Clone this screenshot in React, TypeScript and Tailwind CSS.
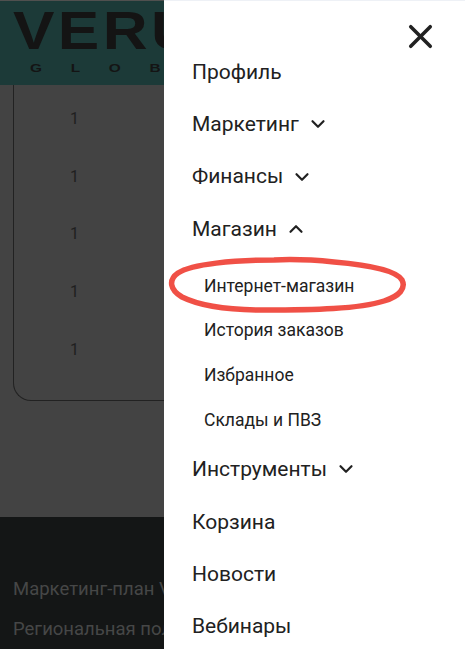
import React from 'react';
import { ChevronDown, ChevronUp, X } from 'lucide-react';

const rows = [1, 1, 1, 1, 1];

const MainItem = ({ label, icon }: { label: string; icon?: 'down' | 'up' }) => (
  <div className="flex h-[52.3px] items-center pl-[28px] text-[21px] leading-none text-[#212121]">
    <span>{label}</span>
    {icon === 'down' && <ChevronDown className="ml-[8px] h-[22px] w-[22px]" strokeWidth={2.4} />}
    {icon === 'up' && <ChevronUp className="ml-[8px] h-[22px] w-[22px]" strokeWidth={2.4} />}
  </div>
);

const SubItem = ({ label }: { label: string }) => (
  <div className="flex h-[44.7px] items-center pl-[40px] text-[17.5px] leading-none text-[#212121]">{label}</div>
);

export default function App() {
  return (
    <div className="flex h-[649px] w-[465px] overflow-hidden font-['Roboto',sans-serif]">
      {/* Dimmed page */}
      <div className="flex w-[164px] shrink-0 flex-col overflow-hidden bg-[#434343]">
        <div className="h-px shrink-0 bg-[#50504f]" />
        <div className="h-[84px] shrink-0 overflow-hidden bg-[#1c3a38] text-[#141414] font-['Liberation_Sans',sans-serif]">
          <div className="ml-[13px] mt-[-2px] origin-left scale-x-[1.15] whitespace-nowrap text-[54px] font-bold leading-[62px] tracking-[3px]">VERUM</div>
          <div className="ml-[30px] mt-[1px] origin-left scale-x-[1.4] whitespace-nowrap text-[11px] font-bold leading-[12px] tracking-[20.5px]">GLOBAL</div>
        </div>
        <div className="h-[432px] shrink-0 pl-[13px]">
          <div className="h-[316px] w-[200px] rounded-bl-[18px] border-b border-l border-[#222222] pt-[5px]">
            {rows.map((n, i) => (
              <div key={i} className="flex h-[57.8px] items-center pl-[56px] text-[16px] text-[#1f1f1f]">
                {n}
              </div>
            ))}
          </div>
        </div>
        <div className="flex-1 bg-[#141616] pl-[13px] pt-[53px] text-[18.5px] leading-[39.5px] text-[#464747]">
          <div className="whitespace-nowrap">Маркетинг-план VERUM</div>
          <div className="whitespace-nowrap">Региональная политика</div>
        </div>
      </div>

      {/* Drawer */}
      <div className="relative flex-1 overflow-hidden border-t border-[#eef1f6] bg-white">
        <div className="flex h-[45px] justify-end pr-[25px] pt-[16px]">
          <X className="h-[39px] w-[39px] text-[#212121]" strokeWidth={2.2} />
        </div>
        <MainItem label="Профиль" />
        <MainItem label="Маркетинг" icon="down" />
        <MainItem label="Финансы" icon="down" />
        <MainItem label="Магазин" icon="up" />
        <div className="pt-[9px]">
          <SubItem label="Интернет-магазин" />
          <SubItem label="История заказов" />
          <SubItem label="Избранное" />
          <SubItem label="Склады и ПВЗ" />
        </div>
        <MainItem label="Инструменты" icon="down" />
        <div className="pt-[1px]">
          <MainItem label="Корзина" />
          <MainItem label="Новости" />
          <MainItem label="Вебинары" />
        </div>

        {/* Hand-drawn red mark */}
        <svg className="absolute left-0 top-0 h-[649px] w-[301px]" viewBox="0 0 301 649" fill="none">
          <path
            d="M110 259 C70 259 28 263 14 272 C4 279 6 289 18 296 C34 304 60 309 100 309 C150 309 195 308 220 300 C236 295 242 287 238 279 C232 269 205 264 170 261 C150 259 130 258 110 259 Z"
            stroke="#ef4136"
            strokeWidth="5.5"
            strokeLinejoin="round"
            opacity="0.92"
          />
        </svg>
      </div>
    </div>
  );
}
